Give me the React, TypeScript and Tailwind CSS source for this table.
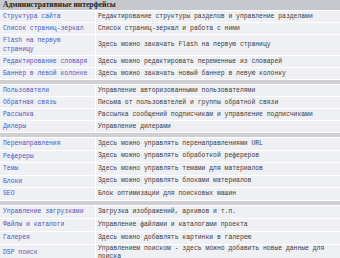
const sections: [string, string][][] = [
  [
    ["Структура сайта", "Редактирование структуры разделов и управление разделами"],
    ["Список страниц-зеркал", "Список страниц-зеркал и работа с ними"],
    ["Flash на первую страницу", "Здесь можно закачать Flash на первую страницу"],
    ["Редактирование словаря", "Здесь можно редактировать переменные из словарей"],
    ["Баннер в левой колонке", "Здесь можно закачать новый баннер в левую колонку"],
  ],
  [
    ["Пользователи", "Управление авторизованными пользователями"],
    ["Обратная связь", "Письма от пользователей и группы обратной связи"],
    ["Рассылка", "Рассылка сообщений подписчикам и управление подписчиками"],
    ["Дилеры", "Управление дилерами"],
  ],
  [
    ["Перенаправления", "Здесь можно управлять перенаправлениями URL"],
    ["Рефереры", "Здесь можно управлять обработкой рефереров"],
    ["Темы", "Здесь можно управлять темами для материалов"],
    ["Блоки", "Здесь можно управлять блоками материалов"],
    ["SEO", "Блок оптимизации для поисковых машин"],
  ],
  [
    ["Управление загрузками", "Загрузка изображений, архивов и т.п."],
    ["Файлы и каталоги", "Управление файлами и каталогами проекта"],
    ["Галерея", "Здесь можно добавлять картинки в галерею"],
    ["DSP поиск", "Управлением поиском - здесь можно добавить новые данные для поиска"],
  ],
];

// row heights vary a little per block in the original
const rowH = ["min-h-[11px]", "min-h-[11px]", "min-h-[11.5px]", "min-h-[12px]"];

const App = () => {
  return (
    <div className="w-[340px] h-[258px] overflow-hidden bg-white font-['Liberation_Mono',monospace] text-[6.4px] leading-[9px]">
      <div className="grid grid-cols-[95px_1fr] gap-px">
        <div className="col-span-2 h-[10px] bg-[#c6c8cd] px-[3px] font-['Liberation_Serif',serif] font-bold text-[7.6px] leading-[10px] text-[#1e1e1e]">
          Административные интерфейсы
        </div>
        {sections.map((rows, i) => (
          <>
            {i > 0 && <div key={"s" + i} className="col-span-2 h-[4px] bg-[#d0d0d2]" />}
            {rows.map(([name, desc]) => (
              <>
                <div key={name} className={`${rowH[i]} bg-[#eff0f4] px-[3px] py-px flex items-center text-[#4a5ac0]`}>
                  {name}
                </div>
                <div key={name + "d"} className={`${rowH[i]} bg-[#eff0f4] px-[2px] flex items-center leading-[8px] text-[#3a3a3a]`}>
                  {desc}
                </div>
              </>
            ))}
          </>
        ))}
      </div>
    </div>
  );
};

export default App;
